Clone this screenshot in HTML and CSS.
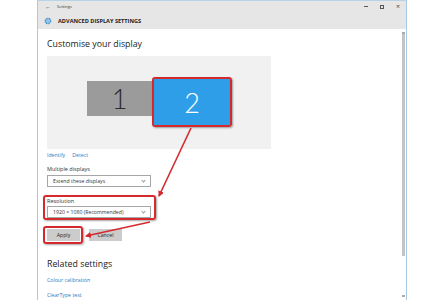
FILE: index.html
```html
<!DOCTYPE html>
<html lang="en">
  <head>
    <meta charset="UTF-8" />
    <title>Advanced display settings</title>
    <link rel="stylesheet" href="styles.css">
  </head>
  <body>
    <div class="window">
      <div class="titlebar">
        <span class="back">&#8592;</span>
        <span class="app-name">Settings</span>
        <div class="controls">
          <span class="ctl min"></span>
          <span class="ctl max"></span>
          <span class="ctl close">&#215;</span>
        </div>
      </div>
      <div class="header">
        <svg class="gear" width="8" height="8" viewBox="0 0 16 16">
          <circle cx="8" cy="8" r="5.5" fill="none" stroke="#2f8fd8" stroke-width="2.4" stroke-dasharray="2.2 1.2"/>
          <circle cx="8" cy="8" r="4.2" fill="none" stroke="#2f8fd8" stroke-width="1.2"/>
          <circle cx="8" cy="8" r="1.8" fill="none" stroke="#2f8fd8" stroke-width="1"/>
        </svg>
        <span class="page-title">ADVANCED DISPLAY SETTINGS</span>
      </div>

      <div class="content">
        <h1>Customise your display</h1>
        <div class="display-area">
          <div class="monitor one">1</div>
          <div class="highlight mon-mark">
            <div class="monitor two">2</div>
          </div>
        </div>
        <div class="links">
          <a>Identify</a>
          <a>Detect</a>
        </div>

        <div class="field">
          <label>Multiple displays</label>
          <div class="select">Extend these displays <span class="chev"></span></div>
        </div>

        <div class="highlight res-mark">
          <label>Resolution</label>
          <div class="select">1920 &#215; 1080 (Recommended) <span class="chev"></span></div>
        </div>

        <div class="buttons">
          <div class="highlight btn-mark"><div class="btn">Apply</div></div>
          <div class="btn">Cancel</div>
        </div>

        <h2>Related settings</h2>
        <a class="related">Colour calibration</a>
        <a class="related">ClearType text</a>
      </div>

      <div class="scrollbar">
        <span class="arrow up"></span>
        <span class="thumb"></span>
        <span class="arrow down"></span>
      </div>
    </div>

    <!-- callout arrows drawn over the screenshot -->
    <svg class="callouts" width="446" height="300" viewBox="0 0 446 300">
      <defs>
        <marker id="head" markerWidth="6" markerHeight="6" refX="5" refY="3" orient="auto" markerUnits="userSpaceOnUse">
          <path d="M0,0 L6,3 L0,6 Z" fill="#d42a2e"/>
        </marker>
      </defs>
      <line x1="191" y1="128" x2="159" y2="196" stroke="#d42a2e" stroke-width="1.6" marker-end="url(#head)"/>
      <line x1="150" y1="222" x2="86" y2="236" stroke="#d42a2e" stroke-width="1.6" marker-end="url(#head)"/>
    </svg>
  </body>
</html>
```

FILE: styles.css
```css
* {
  margin: 0;
  padding: 0;
  box-sizing: border-box;
}
body {
  width: 446px;
  height: 300px;
  overflow: hidden;
  background-color: white;
  font-family: "Open Sans", "Noto Sans", sans-serif;
  font-size: 5px;
  color: #222;
  position: relative;
}
a {
  color: #2a7bc6;
}

.window {
  margin-left: 37px;
  width: 370px;
  height: 300px;
  border-left: 1px solid #a8c9e4;
  border-right: 1px solid #a8c9e4;
  border-top: 1px solid #b8d2e8;
  background-color: white;
  position: relative;
}

/* title + header band */
.titlebar {
  height: 11px;
  background-color: #e6e6e6;
  display: flex;
  align-items: center;
  font-size: 4px;
  padding-left: 7px;
  color: #333;
}
.back {
  font-size: 6px;
  margin-right: 6px;
}
.controls {
  margin-left: auto;
  display: flex;
  align-items: center;
  gap: 12px;
  padding-right: 6px;
}
.ctl {
  display: block;
  width: 4px;
}
.min {
  height: 1px;
  background: #555;
}
.max {
  height: 4px;
  border: 1px solid #555;
}
.close {
  font-size: 7px;
  line-height: 4px;
  color: #444;
}
.header {
  height: 17px;
  background-color: #e6e6e6;
  display: flex;
  align-items: center;
  padding-left: 6px;
  gap: 6px;
}
.page-title {
  font-size: 5.6px;
  font-weight: bold;
  color: #222;
}

/* main content */
.content {
  padding-left: 9px;
  display: flex;
  flex-direction: column;
  align-items: flex-start;
}
h1, h2 {
  font-weight: normal;
  font-size: 8.8px;
  line-height: 14px;
  color: #222;
}
h1 {
  margin-top: 8px;
}
.display-area {
  margin-top: 5px;
  width: 224px;
  height: 93px;
  background-color: #f1f1f1;
  display: flex;
  align-items: flex-start;
  padding-left: 40px;
  padding-top: 25px;
}
.monitor {
  display: flex;
  align-items: center;
  justify-content: center;
  font-family: Lato, "Open Sans", sans-serif;
  font-size: 27px;
  font-weight: 300;
}
.monitor.one {
  width: 65px;
  height: 35px;
  background-color: #9b9b9b;
  color: #2a2a2a;
}
.monitor.two {
  width: 76px;
  height: 46px;
  background-color: #2f9ee9;
  color: white;
}
.highlight {
  border: 2px solid #d42a2e;
  border-radius: 3px;
  box-shadow: 1px 1px 2px rgba(0, 0, 0, 0.35);
}
.mon-mark {
  margin-top: -4px;
}

.links {
  display: flex;
  gap: 7px;
  font-size: 5.2px;
  line-height: 8px;
  margin-top: 2px;
}
.field {
  margin-top: 7px;
  display: flex;
  flex-direction: column;
}
label {
  font-size: 5.5px;
  line-height: 7px;
  color: #333;
}
.select {
  margin-top: 2px;
  width: 104px;
  height: 12px;
  border: 1px solid #a6a6a6;
  background: white;
  font-size: 5.2px;
  display: flex;
  align-items: center;
  padding-left: 5px;
  color: #333;
  position: relative;
}
.chev {
  position: absolute;
  right: 5px;
  top: 3px;
  width: 3px;
  height: 3px;
  border-right: 1px solid #999;
  border-bottom: 1px solid #999;
  transform: rotate(45deg);
}
.res-mark {
  margin-top: 8px;
  margin-left: -4px;
  padding: 1px 3px 0 2px;
  width: 113px;
  display: flex;
  flex-direction: column;
}
.res-mark label {
  line-height: 6px;
}

.buttons {
  margin-top: 6px;
  margin-left: -4px;
  display: flex;
  align-items: center;
  gap: 6px;
}
.btn-mark {
  padding: 1px 1px 1px 2px;
}
.btn {
  width: 33px;
  height: 12px;
  background-color: #cccccc;
  font-size: 5.2px;
  display: flex;
  align-items: center;
  justify-content: center;
  color: #222;
}
h2 {
  margin-top: 13px;
}
.related {
  font-size: 5.2px;
  line-height: 8px;
  margin-top: 5px;
}
.related + .related {
  margin-top: 7px;
}

/* scrollbar */
.scrollbar {
  position: absolute;
  right: 0;
  top: 30px;
  bottom: 0;
  width: 5px;
  display: flex;
  flex-direction: column;
  align-items: center;
}
.thumb {
  width: 3px;
  height: 222px;
  background-color: #c4c4c4;
}
.arrow {
  width: 3px;
  height: 3px;
}
.arrow.up {
  border-bottom: 2px solid #aaa;
}
.arrow.down {
  margin-top: auto;
  border-top: 2px solid #aaa;
  margin-bottom: 2px;
}

.callouts {
  position: absolute;
  left: 0;
  top: 0;
  pointer-events: none;
}
```
